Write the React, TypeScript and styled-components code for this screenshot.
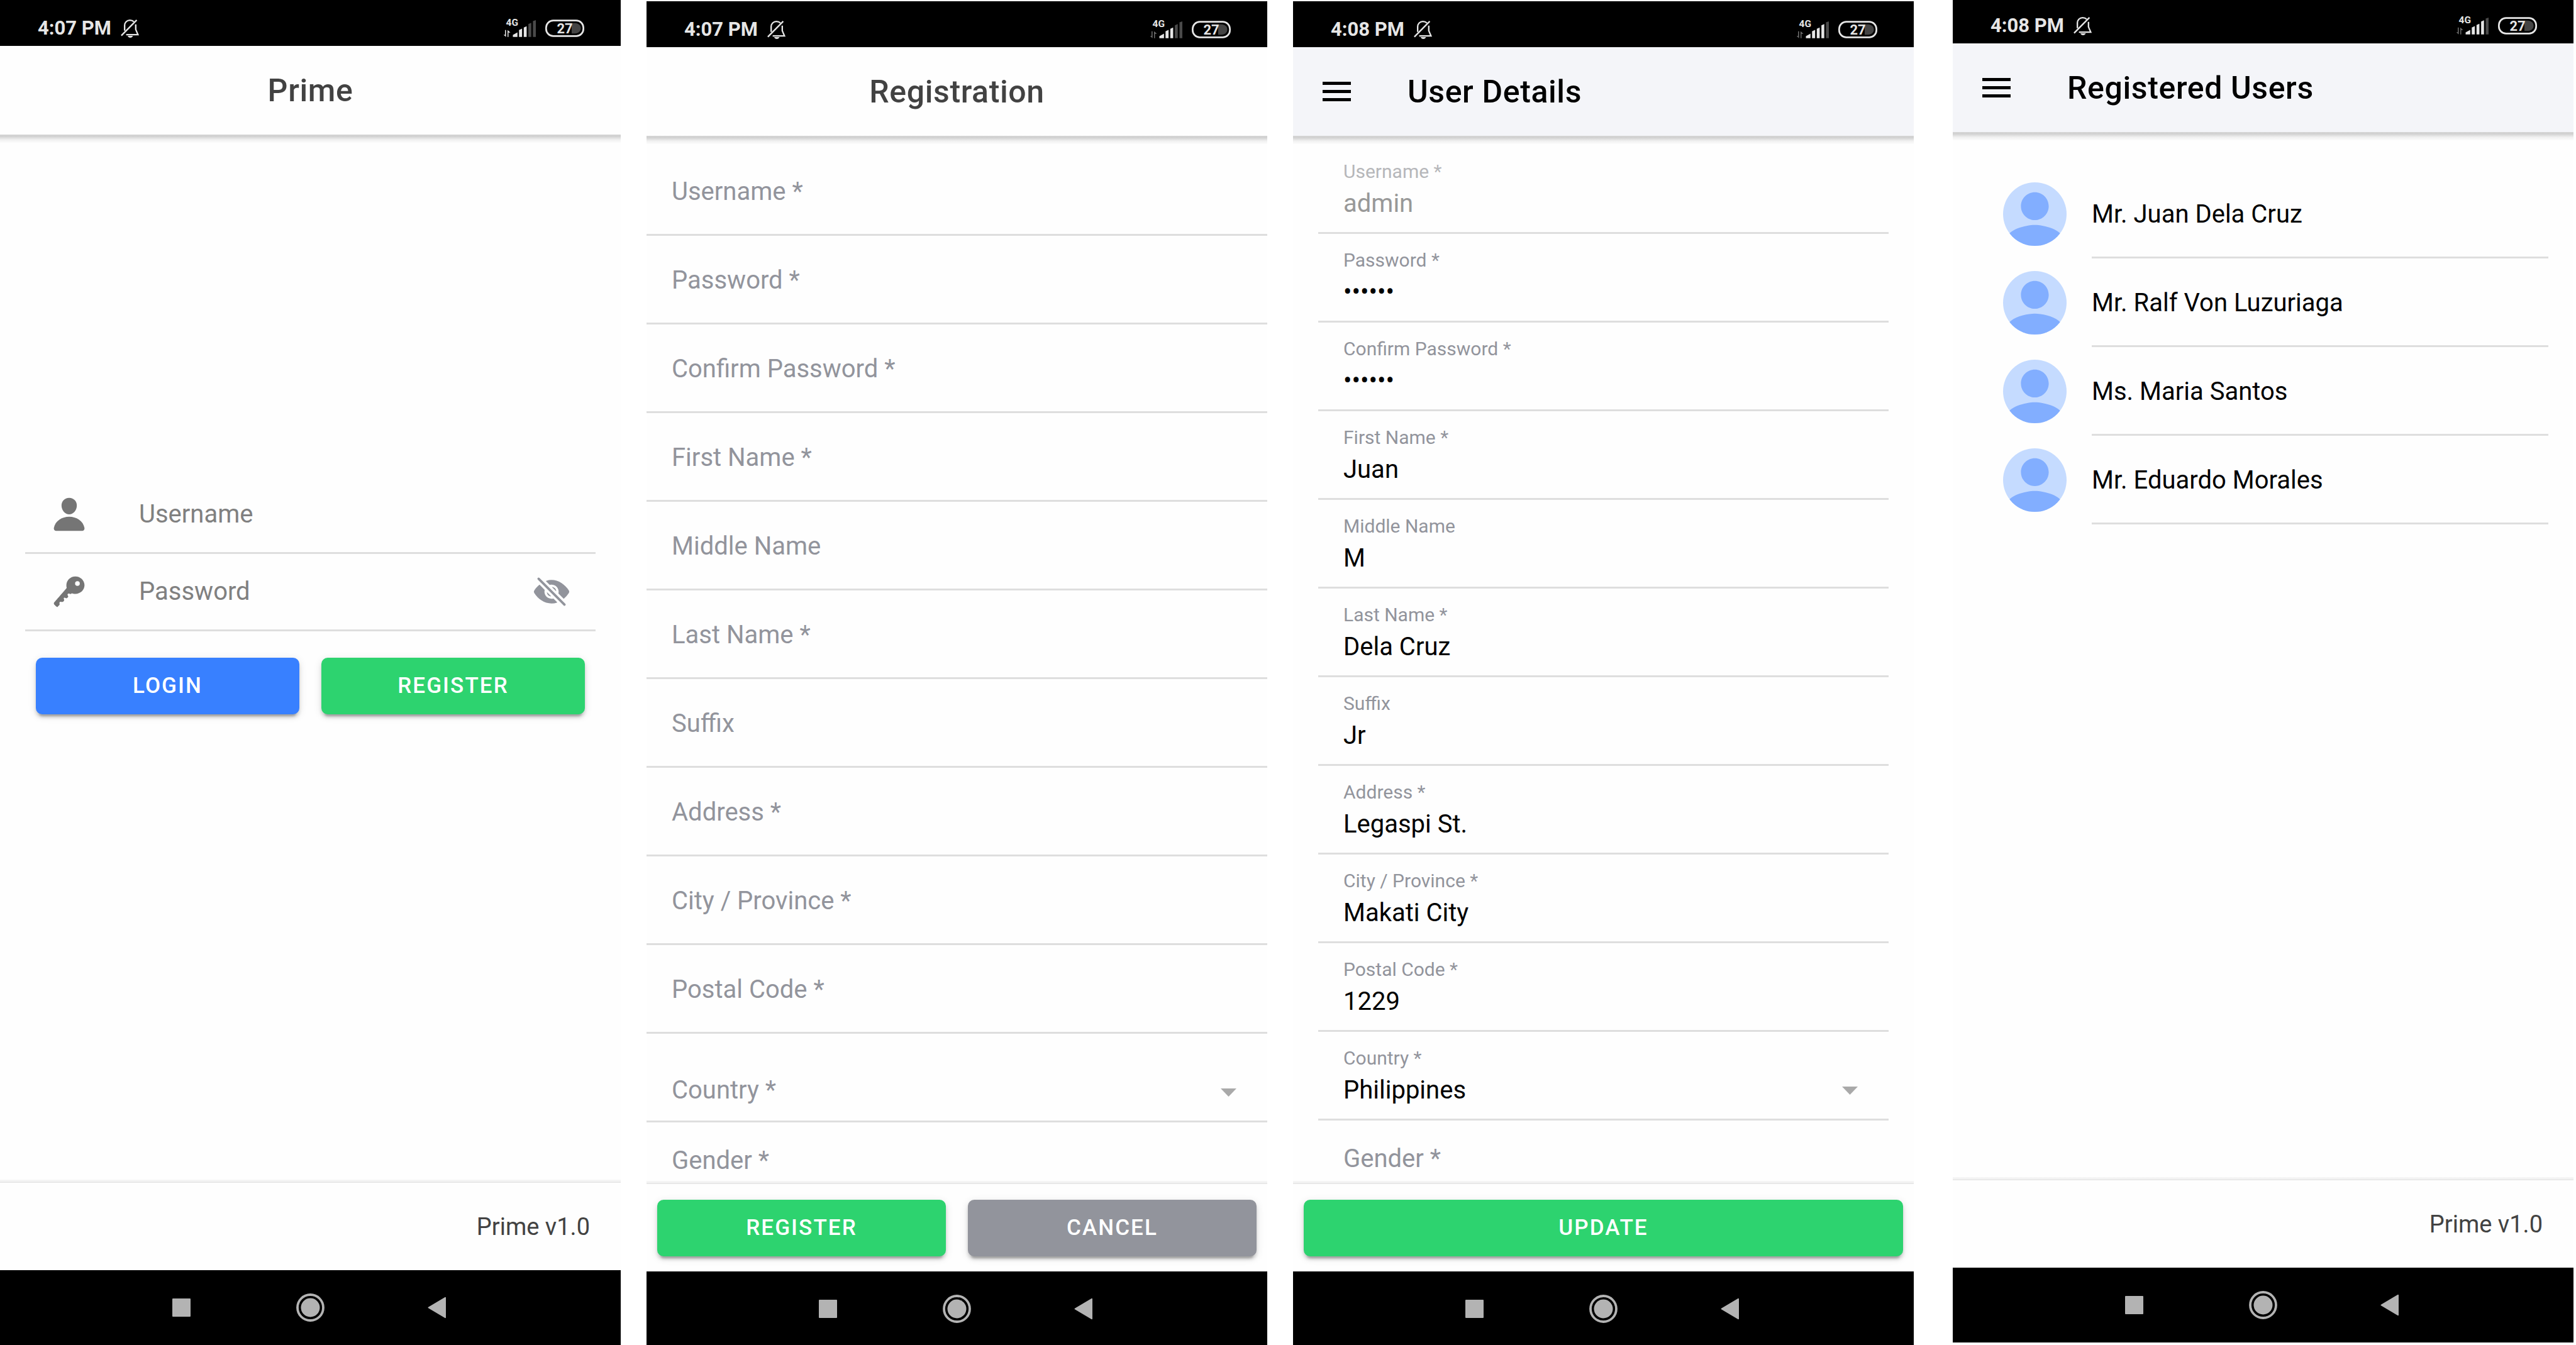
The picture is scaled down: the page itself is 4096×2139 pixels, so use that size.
import React from "react";
import styled, { createGlobalStyle } from "styled-components";
import { IoPerson, IoKey, IoEyeOff } from "react-icons/io5";

const GlobalStyle = createGlobalStyle`
  *, *::before, *::after { box-sizing: border-box; }
  body {
    margin: 0;
    background: #ffffff;
    font-family: Roboto, "Liberation Sans", sans-serif;
    color: #000000;
    overflow: hidden;
  }
  button, input, select { font-family: inherit; margin: 0; }
`;

/* ---------- page ---------- */

const Gallery = styled.main`
  display: flex;
  gap: 41px;
  height: 100vh;
  padding-right: 4px;
  overflow: hidden;
`;

const Phone = styled.section<{ $shift?: number; $indent?: number }>`
  flex: 1 1 0;
  min-width: 0;
  height: 100vh;
  margin-top: ${(p) => p.$shift ?? 0}px;
  margin-left: ${(p) => p.$indent ?? 0}px;
  display: flex;
  flex-direction: column;
  background: #fefefe;
`;

/* ---------- status bar ---------- */

const StatusBar = styled.div`
  flex: none;
  height: 73px;
  padding: 17px 58px 0 60px;
  display: flex;
  align-items: center;
  justify-content: space-between;
  background: #000000;
  color: #e6e6e6;
`;

const StatusGroup = styled.div`
  display: flex;
  align-items: center;
  gap: 15px;
`;

const Clock = styled.span`
  font-size: 31px;
  line-height: 36px;
  font-weight: 700;
`;

const BARS = [
  "M17 31V27.5L25 23V31Z",
  "M27.7 31V19L33 16.5V31Z",
  "M36 31V14.5L41 12.5V31Z",
  "M44 31V8.5L49 6.5V31Z",
  "M52 31V3.5L57 1.7V31Z",
];

function Status({ time, bars, active }: { time: string; bars: number; active?: boolean }) {
  const arrows = active ? "#e6e6e6" : "#6e6e6e";
  return (
    <StatusBar>
      <StatusGroup>
        <Clock>{time}</Clock>
        <svg width="29" height="29" viewBox="0 0 32 32" fill="none" stroke="#e6e6e6" strokeWidth="2.6">
          <path d="M6.8 19.5V10.5C6.8 5 11 1.3 16 1.3c2.8 0 5.2 .8 7 2.6" />
          <path d="M26.3 8.5V17.5L30.2 26.6H9.5" />
          <path d="M1 28.3 28 1" />
          <path d="M12 28.8H21.5C20.5 31 19 32 16.7 32S13 31 12 28.8Z" fill="#e6e6e6" stroke="none" />
        </svg>
      </StatusGroup>
      <StatusGroup>
        <svg width="52" height="44" viewBox="0 -8 57 48">
          <text x="5" y="12" fontSize="17" fontWeight="700" fill="#e6e6e6" fontFamily="Roboto, sans-serif">4G</text>
          <path d="M3.3 19V27.3H.7L5 31V19Z" fill={arrows} />
          <path d="M7.7 31V19L12.7 23.3H9.3V31Z" fill={arrows} />
          {BARS.map((d, i) => (
            <path key={d} d={d} fill={i < bars ? "#e6e6e6" : "#4a4a4a"} />
          ))}
        </svg>
        <svg width="62" height="28" viewBox="0 0 68 30">
          <path d="M46 6H52C58 6 62 10 62 15S58 24 52 24H46Z" fill="#444444" />
          <rect x="1.5" y="1.5" width="65" height="27" rx="12.5" fill="none" stroke="#e6e6e6" strokeWidth="3" />
          <text x="34" y="23.5" fontSize="24" fontWeight="700" textAnchor="middle" fill="#e6e6e6" fontFamily="Roboto, sans-serif">27</text>
        </svg>
      </StatusGroup>
    </StatusBar>
  );
}

/* ---------- header ---------- */

const Header = styled.header<{ $tinted?: boolean }>`
  flex: none;
  position: relative;
  z-index: 1;
  height: 141px;
  padding: 0 47px;
  display: flex;
  align-items: center;
  justify-content: ${(p) => (p.$tinted ? "flex-start" : "center")};
  gap: 90px;
  background: ${(p) => (p.$tinted ? "#f4f5f9" : "#fefefe")};
  color: ${(p) => (p.$tinted ? "#000000" : "#424242")};

  &::after {
    content: "";
    position: absolute;
    left: 0;
    right: 0;
    top: 100%;
    height: 13px;
    background: linear-gradient(
      rgba(0, 0, 0, 0.16),
      rgba(0, 0, 0, 0.18) 20%,
      rgba(0, 0, 0, 0.05) 65%,
      rgba(0, 0, 0, 0.01)
    );
  }
`;

const Title = styled.h1`
  margin: 0;
  font-size: 50px;
  line-height: 60px;
  font-weight: 500;
  letter-spacing: 0.0125em;
`;

const IconButton = styled.button`
  flex: none;
  display: flex;
  padding: 0;
  border: 0;
  background: none;
  color: #92949c;
`;

function MenuButton() {
  return (
    <IconButton type="button" aria-label="Menu">
      <svg width="45" height="31" viewBox="0 0 45 31" fill="#000000">
        <rect width="45" height="5" />
        <rect y="13" width="45" height="5" />
        <rect y="26" width="45" height="5" />
      </svg>
    </IconButton>
  );
}

/* ---------- footer and navigation ---------- */

const Footer = styled.footer`
  flex: none;
  position: relative;
  height: 139px;
  padding: 0 17px;
  display: flex;
  align-items: center;
  gap: 35px;
  background: #fefefe;

  &::before {
    content: "";
    position: absolute;
    left: 0;
    right: 0;
    bottom: 100%;
    height: 5px;
    background: linear-gradient(rgba(0, 0, 0, 0.03), rgba(0, 0, 0, 0.05) 60%, rgba(0, 0, 0, 0.12));
  }
`;

const Version = styled.p`
  margin: 0 32px 0 auto;
  font-size: 38px;
  line-height: 44px;
  color: #424242;
`;

const NavBar = styled.nav`
  flex: none;
  height: 119px;
  display: flex;
  align-items: center;
  justify-content: center;
  gap: 160px;
  background: #000000;
`;

function Navigation() {
  return (
    <NavBar>
      <IconButton type="button" aria-label="Recent apps">
        <svg width="45" height="45" viewBox="0 0 45 45" fill="#b3b3b3">
          <rect x="8" y="8" width="29" height="29" rx="1" />
        </svg>
      </IconButton>
      <IconButton type="button" aria-label="Home">
        <svg width="45" height="45" viewBox="0 0 45 45" fill="#b3b3b3">
          <circle cx="22.5" cy="22.5" r="20.5" fill="none" stroke="#b3b3b3" strokeWidth="3.8" />
          <circle cx="22.5" cy="22.5" r="15" />
        </svg>
      </IconButton>
      <IconButton type="button" aria-label="Back">
        <svg width="45" height="45" viewBox="0 0 45 45" fill="#b3b3b3" stroke="#b3b3b3" strokeWidth="2" strokeLinejoin="round">
          <path d="M5.5 22.5 32 6.8V38.2Z" />
        </svg>
      </IconButton>
    </NavBar>
  );
}

/* ---------- shared controls ---------- */

const COLORS = { primary: "#3880ff", success: "#2dd36f", medium: "#92949c" };

const Button = styled.button<{ $color: keyof typeof COLORS }>`
  flex: 1 1 0;
  height: 90px;
  padding: 0;
  border: 0;
  border-radius: 10px;
  background: ${(p) => COLORS[p.$color]};
  color: #ffffff;
  font-size: 35px;
  line-height: 42px;
  font-weight: 500;
  letter-spacing: 0.06em;
  text-transform: uppercase;
  box-shadow:
    0 8px 3px -5px rgba(0, 0, 0, 0.2),
    0 5px 5px 0 rgba(0, 0, 0, 0.14),
    0 3px 13px 0 rgba(0, 0, 0, 0.12);
`;

const Content = styled.div`
  flex: 1 1 0;
  min-height: 0;
  overflow: hidden;
`;

const Input = styled.input<{ $hint?: string }>`
  flex: none;
  min-width: 0;
  width: 100%;
  height: 48px;
  padding: 0;
  border: 0;
  outline: 0;
  background: transparent;
  color: #000000;
  font-size: 40px;
  line-height: 48px;

  &::placeholder {
    color: ${(p) => p.$hint ?? "#92949c"};
    opacity: 1;
  }
  &:disabled {
    color: #989898;
  }
`;

const Select = styled.select<{ $empty?: boolean }>`
  appearance: none;
  width: 100%;
  height: 48px;
  padding: 0;
  border: 0;
  outline: 0;
  background: transparent;
  color: ${(p) => (p.$empty ? "#92949c" : "#000000")};
  font-size: 40px;
  line-height: 48px;
`;

/* ---------- login ---------- */

const LoginForm = styled.form`
  padding: 544px 40px 0;
`;

const LoginRow = styled.div`
  height: 123px;
  padding: 0 40px;
  display: flex;
  align-items: center;
  gap: 81px;
  border-bottom: 3px solid #dedede;
  color: #757575;

  & > * {
    flex-shrink: 0;
  }
  & > input {
    flex: 1 1 0;
  }
`;

const LoginActions = styled.div`
  display: flex;
  gap: 35px;
  padding: 42px 17px 0;
`;

function LoginScreen() {
  return (
    <Phone>
      <Status time="4:07 PM" bars={3} active />
      <Header>
        <Title>Prime</Title>
      </Header>
      <Content>
        <LoginForm>
          <LoginRow>
            <IoPerson size={60} />
            <Input $hint="#808080" placeholder="Username" aria-label="Username" />
          </LoginRow>
          <LoginRow>
            <IoKey size={60} />
            <Input $hint="#808080" type="password" placeholder="Password" aria-label="Password" />
            <IconButton type="button" aria-label="Show password">
              <IoEyeOff size={60} />
            </IconButton>
          </LoginRow>
          <LoginActions>
            <Button type="button" $color="primary">Login</Button>
            <Button type="button" $color="success">Register</Button>
          </LoginActions>
        </LoginForm>
      </Content>
      <Footer>
        <Version>Prime v1.0</Version>
      </Footer>
      <Navigation />
    </Phone>
  );
}

/* ---------- forms ---------- */

const Form = styled.form<{ $inset?: boolean }>`
  padding: ${(p) => (p.$inset ? "15px 40px 0" : "18px 0 0")};
`;

const Item = styled.div<{ $align?: "center" | "flex-start" | "flex-end" }>`
  position: relative;
  height: 141px;
  padding: ${(p) => (p.$align ? "24px 40px" : "28px 40px 24px")};
  display: flex;
  flex-direction: column;
  justify-content: ${(p) => p.$align ?? "center"};
  border-bottom: 3px solid #dedede;
`;

const FloatingLabel = styled.label<{ $muted?: boolean }>`
  margin-bottom: 9px;
  font-size: 30px;
  line-height: 36px;
  color: ${(p) => (p.$muted ? "#b6b7ba" : "#92949c")};
`;

const GroupLabel = styled.div`
  padding: 37px 40px;
  font-size: 40px;
  line-height: 48px;
  color: #92949c;
`;

const Caret = styled.svg`
  position: absolute;
  right: 49px;
  bottom: 38px;
  pointer-events: none;
`;

function CaretIcon() {
  return (
    <Caret width="25" height="13" viewBox="0 0 25 13" fill="#a9a9a9">
      <path d="M0 0H25L12.5 13Z" />
    </Caret>
  );
}

const REGISTRATION_FIELDS = [
  "Username *",
  "Password *",
  "Confirm Password *",
  "First Name *",
  "Middle Name",
  "Last Name *",
  "Suffix",
  "Address *",
  "City / Province *",
  "Postal Code *",
];

function RegistrationScreen() {
  return (
    <Phone $shift={2}>
      <Status time="4:07 PM" bars={3} />
      <Header>
        <Title>Registration</Title>
      </Header>
      <Content>
        <Form>
          {REGISTRATION_FIELDS.map((name) => (
            <Item key={name}>
              <Input
                type={name.includes("Password") ? "password" : "text"}
                placeholder={name}
                aria-label={name}
              />
            </Item>
          ))}
          <Item $align="flex-end">
            <Select $empty aria-label="Country *" defaultValue="">
              <option value="">Country *</option>
            </Select>
            <CaretIcon />
          </Item>
          <GroupLabel>Gender *</GroupLabel>
        </Form>
      </Content>
      <Footer>
        <Button type="button" $color="success">Register</Button>
        <Button type="button" $color="medium">Cancel</Button>
      </Footer>
      <Navigation />
    </Phone>
  );
}

const DETAILS = [
  { id: "username", label: "Username *", value: "admin", disabled: true },
  { id: "password", label: "Password *", value: "secret", type: "password" },
  { id: "confirm", label: "Confirm Password *", value: "secret", type: "password" },
  { id: "first", label: "First Name *", value: "Juan" },
  { id: "middle", label: "Middle Name", value: "M" },
  { id: "last", label: "Last Name *", value: "Dela Cruz" },
  { id: "suffix", label: "Suffix", value: "Jr" },
  { id: "address", label: "Address *", value: "Legaspi St." },
  { id: "city", label: "City / Province *", value: "Makati City" },
  { id: "postal", label: "Postal Code *", value: "1229" },
];

function DetailsScreen() {
  return (
    <Phone $shift={2}>
      <Status time="4:08 PM" bars={4} />
      <Header $tinted>
        <MenuButton />
        <Title>User Details</Title>
      </Header>
      <Content>
        <Form $inset>
          {DETAILS.map((f) => (
            <Item key={f.id} $align="flex-start">
              <FloatingLabel htmlFor={f.id} $muted={f.disabled}>{f.label}</FloatingLabel>
              <Input id={f.id} type={f.type ?? "text"} defaultValue={f.value} disabled={f.disabled} />
            </Item>
          ))}
          <Item $align="flex-start">
            <FloatingLabel htmlFor="country">Country *</FloatingLabel>
            <Select id="country" defaultValue="PH">
              <option value="PH">Philippines</option>
            </Select>
            <CaretIcon />
          </Item>
          <GroupLabel>Gender *</GroupLabel>
        </Form>
      </Content>
      <Footer>
        <Button type="button" $color="success">Update</Button>
      </Footer>
      <Navigation />
    </Phone>
  );
}

/* ---------- user list ---------- */

const UserList = styled.ul`
  margin: 0;
  padding: 60px 40px 0 80px;
  list-style: none;
`;

const UserRow = styled.li`
  display: flex;
  align-items: center;
  gap: 40px;
`;

const UserName = styled.span`
  flex: 1 1 0;
  height: 141px;
  padding-top: 4px;
  display: flex;
  align-items: center;
  border-bottom: 3px solid #dedede;
  font-size: 40px;
  line-height: 48px;
`;

const Avatar = styled.svg`
  flex: none;
  width: 101px;
  height: 101px;
  border-radius: 50%;
`;

const USERS = ["Mr. Juan Dela Cruz", "Mr. Ralf Von Luzuriaga", "Ms. Maria Santos", "Mr. Eduardo Morales"];

function UsersScreen() {
  return (
    <Phone $shift={-4} $indent={21}>
      <Status time="4:08 PM" bars={4} />
      <Header $tinted>
        <MenuButton />
        <Title>Registered Users</Title>
      </Header>
      <Content>
        <UserList>
          {USERS.map((name) => (
            <UserRow key={name}>
              <Avatar viewBox="0 0 512 512">
                <path fill="#c5dbff" d="M0 0h512v512H0z" />
                <path
                  fill="#82aeff"
                  d="M256 304c61.6 0 112-50.4 112-112S317.6 80 256 80s-112 50.4-112 112 50.4 112 112 112zm0 40c-74.2 0-224 37.8-224 112v56h448v-56c0-74.2-149.8-112-224-112z"
                />
              </Avatar>
              <UserName>{name}</UserName>
            </UserRow>
          ))}
        </UserList>
      </Content>
      <Footer>
        <Version>Prime v1.0</Version>
      </Footer>
      <Navigation />
    </Phone>
  );
}

export default function App() {
  return (
    <>
      <GlobalStyle />
      <Gallery>
        <LoginScreen />
        <RegistrationScreen />
        <DetailsScreen />
        <UsersScreen />
      </Gallery>
    </>
  );
}
